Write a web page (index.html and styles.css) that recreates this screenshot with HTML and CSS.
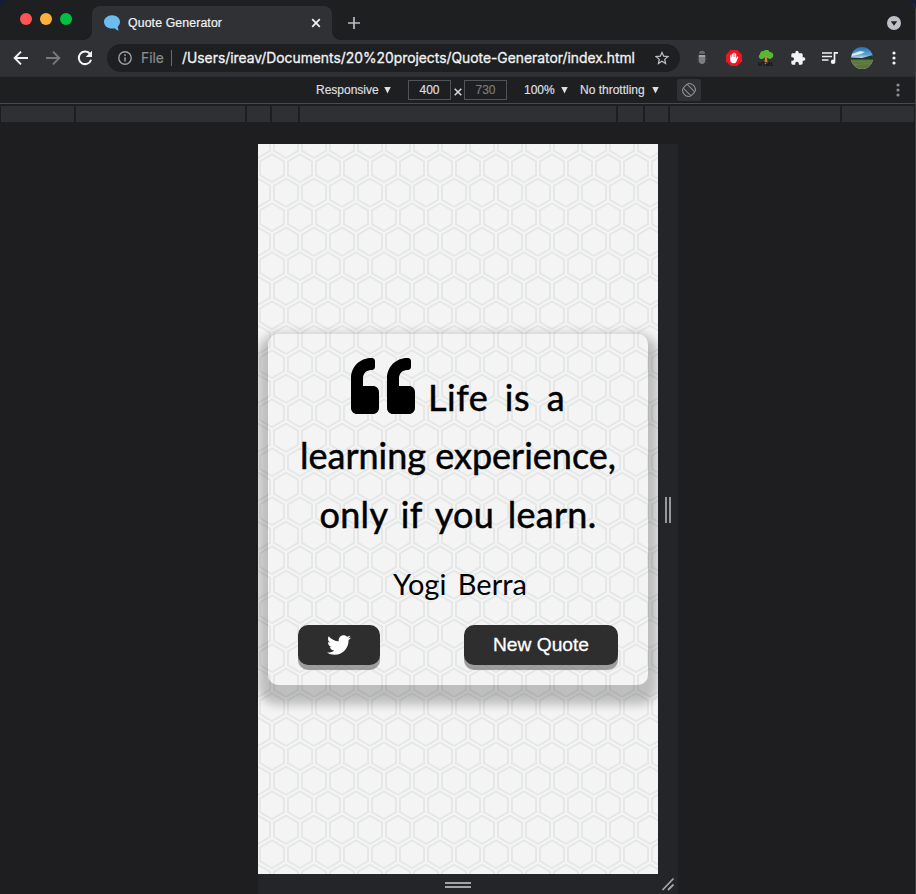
FILE: index.html
```html
<!DOCTYPE html>
<html lang="en">
<head>
<meta charset="utf-8">
<title>Quote Generator</title>
<link rel="stylesheet" href="styles.css">
</head>
<body>
<div class="window">
  <header class="tabstrip">
    <div class="lights"><i class="red"></i><i class="amber"></i><i class="green"></i></div>
    <div class="tab">
      <svg class="favicon" width="18" height="18" viewBox="0 0 18 18"><path fill="#6bbdf0" d="M9 1.200C13.500 1.200 17 4 17 7.800c0 2-.8 3.600-2.200 4.900.1 1.500.3 2.700 1 3.800-2-.3-3.100-1.200-4.200-2.300-.8.200-1.700.3-2.600.3C4.500 14.500 1 11.600 1 7.900S4.500 1.200 9 1.200z"/></svg>
      <span class="tab-title">Quote Generator</span>
      <svg width="10" height="10" viewBox="0 0 10 10"><path d="M1.200 1.200l7.600 7.600M8.800 1.200L1.200 8.800" stroke="#f1f3f4" stroke-width="1.700"/></svg>
    </div>
    <svg class="plus" width="14" height="14" viewBox="0 0 14 14"><path d="M7 1v12M1 7h12" stroke="#b9bcc1" stroke-width="1.700"/></svg>
    <svg class="search-tabs" width="14" height="14" viewBox="0 0 14 14"><circle cx="7" cy="7" r="7" fill="#bdc1c6"/><path d="M3.800 5.200h6.400L7 9.800z" fill="#202124"/></svg>
  </header>

  <div class="toolbar">
    <svg width="16" height="16" viewBox="0 0 16 16" fill="none" stroke="#f1f3f4" stroke-width="1.900"><path d="M15 8H2.500M8 1.700L1.700 8 8 14.300"/></svg>
    <svg width="16" height="16" viewBox="0 0 16 16" fill="none" stroke="#77797d" stroke-width="1.900"><path d="M1 8h12.500M8 1.700L14.300 8 8 14.300"/></svg>
    <svg width="16" height="16" viewBox="0 0 16 16"><path d="M13.200 4.100A6.300 6.300 0 1 0 14.100 9.700" fill="none" stroke="#f1f3f4" stroke-width="2"/><path d="M15 .8v6.300H8.700z" fill="#f1f3f4"/></svg>
    <div class="address">
      <svg width="14" height="14" viewBox="0 0 14 14"><circle cx="7" cy="7" r="6.200" fill="none" stroke="#9aa0a6" stroke-width="1.400"/><path d="M7 6.200v4.300M7 3.300v1.600" stroke="#9aa0a6" stroke-width="1.500"/></svg>
      <span class="scheme">File</span><span class="divider"></span><span class="url">/Users/ireav/Documents/20%20projects/Quote-Generator/index.html</span>
      <svg class="star" width="14" height="14" viewBox="0 0 14 14"><path d="M7 1.400l1.700 3.800 4.200.4-3.200 2.800.9 4.100L7 10.300l-3.600 2.200.9-4.100L1.100 5.600l4.200-.4z" fill="none" stroke="#bdc1c6" stroke-width="1.200"/></svg>
    </div>
    <div class="extensions">
      <svg width="16" height="16" viewBox="0 0 16 16"><path d="M2.500 5.500l3 1.500M2 9h3M3 13l2.500-2M13.500 5.500l-3 1.500M14 9h-3M13 13l-2.500-2" stroke="#3e4044"/><path d="M5 3.800a3 3 0 0 1 6 0z" fill="#6a6c6f"/><path d="M4.700 5h6.600v5.500c0 2-1.300 3.500-3.300 3.500s-3.300-1.500-3.300-3.500z" fill="#7d7d7f"/><path d="M5 5h6v2H5z" fill="#a4a4a4"/></svg>
      <svg width="16" height="16" viewBox="0 0 16 16"><path d="M4.700 0h6.600L16 4.700v6.600L11.300 16H4.700L0 11.300V4.700z" fill="#ed1522"/><path d="M4.200 8.500V5.400q.6-.9 1.100 0v2.200h.4V3.900q.6-.9 1.200 0v3.200h.4V3q.7-.8 1.300 0v4.100H9V3.700q.6-.8 1.200 0v4.900l1.100-2q.9-.4 1.100.3L10.200 12c-.5.900-1.200 1.300-2.400 1.300-2.400 0-3.600-1.500-3.600-3.600z" fill="#fff"/></svg>
      <svg width="16" height="16" viewBox="0 0 16 16"><path d="M7 6.500h2l.6 7.500H6.400z" fill="#c98635"/><path d="M4 9a2.600 2.600 0 0 1-2-4.700A3 3 0 0 1 5.700 1.200a3.200 3.200 0 0 1 5.800.8A3.300 3.300 0 0 1 13.800 8c-1.300 1.500-3.500.9-4.500-.4L8 8.500 6.500 7.300C6 8.500 5 9 4 9z" fill="#4fbd32"/><path d="M8 11V5.500M8 8l2.500-2.500M8 7L6 5" stroke="#c98635" stroke-width="1.100"/><text x="0" y="16" font-family="Liberation Sans" font-weight="700" font-size="5.500" textLength="16" fill="#130e0b">HTML</text></svg>
      <svg width="16" height="16" viewBox="0 0 24 24"><path fill="#f1f3f4" d="M20.500 11H19V7c0-1.100-.9-2-2-2h-4V3.500a2.500 2.500 0 0 0-5 0V5H4c-1.100 0-2 .9-2 2v3.800h1.500a2.700 2.700 0 0 1 0 5.400H2V20c0 1.100.9 2 2 2h3.800v-1.500a2.700 2.700 0 0 1 5.400 0V22H17c1.100 0 2-.9 2-2v-4h1.500a2.500 2.500 0 0 0 0-5z"/></svg>
      <svg width="16" height="16" viewBox="0 0 16 16"><path d="M0 3h10M0 6.500h10M0 10h6.500M12.500 11V2.900h3.500" stroke="#f1f3f4" stroke-width="1.700" fill="none"/><circle cx="11.100" cy="11.700" r="2.300" fill="#f1f3f4"/></svg>
      <svg class="avatar" width="22" height="22" viewBox="0 0 22 22"><defs><clipPath id="round"><circle cx="11" cy="11" r="11"/></clipPath><linearGradient id="sky" x2="0" y2="1"><stop stop-color="#2670b0"/><stop offset=".35" stop-color="#5fa3d2"/><stop offset=".5" stop-color="#c4dcea"/></linearGradient></defs><g clip-path="url(#round)"><path fill="url(#sky)" d="M0 0h22v22H0z"/><path fill="#dbe9f1" d="M1 7l8-3 5 1-4 2-9 2z"/><path fill="#1c3925" d="M0 10.500l11 .5 11-3v5H0z"/><path fill="#5b733d" d="M0 12.500h22V22H0z"/><path d="M0 15l22-1M0 18l22-2" stroke="#718349" stroke-width=".8"/></g></svg>
      <svg class="dots" width="4" height="14" viewBox="0 0 4 14" fill="#f1f3f4"><circle cx="2" cy="2" r="1.600"/><circle cx="2" cy="7" r="1.600"/><circle cx="2" cy="12" r="1.600"/></svg>
    </div>
  </div>

  <div class="devicebar">
    <span class="responsive">Responsive</span><i class="caret"></i>
    <span class="size size-w">400</span>
    <svg class="times" width="8" height="8" viewBox="0 0 8 8"><path d="M.7.7l6.600 6.600M7.300.7L.7 7.300" stroke="#dcdee0" stroke-width="1.500"/></svg>
    <span class="size size-h">730</span>
    <span class="zoom">100%</span><i class="caret"></i>
    <span class="throttle">No throttling</span><i class="caret"></i>
    <span class="rotate"><svg width="14" height="14" viewBox="0 0 14 14" fill="none" stroke="#8b8d91" stroke-width="1.100"><rect x="4.200" y="1.400" width="5.600" height="11.200" rx="1" transform="rotate(-45 7 7)"/><path d="M5.500.7a6.500 6.500 0 0 1 7.800 7.800M8.500 13.300A6.500 6.500 0 0 1 .7 5.500"/></svg></span>
    <svg class="bar-dots" width="4" height="14" viewBox="0 0 4 14" fill="#8b8d91"><circle cx="2" cy="2" r="1.600"/><circle cx="2" cy="7" r="1.600"/><circle cx="2" cy="12" r="1.600"/></svg>
  </div>

  <div class="rulers"><i></i><i></i><i></i><i></i><i></i><i></i><i></i><i></i><i></i></div>

  <div class="device">
    <main class="page">
      <section class="quote-container">
        <div class="quote-text">
          <div class="line first"><svg width="64" height="64" viewBox="0 0 512 512"><path d="M464 256h-80v-64c0-35.300 28.700-64 64-64h8c13.300 0 24-10.700 24-24V56c0-13.300-10.700-24-24-24h-8c-88.400 0-160 71.600-160 160v240c0 26.500 21.500 48 48 48h128c26.500 0 48-21.500 48-48V304c0-26.500-21.500-48-48-48zm-288 0H96v-64c0-35.300 28.700-64 64-64h8c13.300 0 24-10.700 24-24V56c0-13.300-10.700-24-24-24h-8C71.600 32 0 103.600 0 192v240c0 26.500 21.500 48 48 48h128c26.500 0 48-21.500 48-48V304c0-26.500-21.500-48-48-48z"/></svg><span>Life is a</span></div>
          <div class="line second">learning experience,</div>
          <div class="line third">only if you learn.</div>
        </div>
        <div class="quote-author">Yogi Berra</div>
        <div class="buttons">
          <button class="twitter" aria-label="Tweet"><svg width="24" height="24" viewBox="0 0 512 512"><path fill="#fff" d="M459.370 151.716c.325 4.548.325 9.097.325 13.645 0 138.720-105.583 298.558-298.558 298.558-59.452 0-114.680-17.219-161.137-47.106 8.447.974 16.568 1.299 25.340 1.299 49.055 0 94.213-16.568 130.274-44.832-46.132-.975-84.792-31.188-98.112-72.772 6.498.974 12.995 1.624 19.818 1.624 9.421 0 18.843-1.300 27.614-3.573-48.081-9.747-84.143-51.980-84.143-102.985v-1.299c13.969 7.797 30.214 12.670 47.431 13.319-28.264-18.843-46.781-51.005-46.781-87.391 0-19.492 5.197-37.360 14.294-52.954 51.655 63.675 129.300 105.258 216.365 109.807-1.624-7.797-2.599-15.918-2.599-24.040 0-57.828 46.782-104.934 104.934-104.934 30.213 0 57.502 12.670 76.670 33.137 23.715-4.548 46.456-13.320 66.599-25.340-7.798 24.366-24.366 44.833-46.132 57.827 21.117-2.273 41.584-8.122 60.426-16.243-14.292 20.791-32.161 39.308-52.628 54.253z"/></svg></button>
          <button class="new-quote">New Quote</button>
        </div>
      </section>
    </main>
    <div class="handle-right"><i></i><i></i></div>
    <div class="handle-bottom"><i></i><i></i></div>
    <svg class="handle-corner" width="20" height="20" viewBox="0 0 20 20" stroke="#a3a4a6" stroke-width="1.800"><path d="M4.500 16L15.500 4.500M10 16l5.500-5.500"/></svg>
  </div>
</div>
</body>
</html>
```
FILE: styles.css
```css
* { box-sizing: border-box; }
body { margin: 0; background: #171b3b; font-family: Inter, "Liberation Sans", sans-serif; }
svg { display: block; flex: none; }
i { display: block; }

.window { width: 916px; height: 894px; overflow: hidden; background: #1e1e20; border-radius: 10px 10px 0 0; border-right: 1px solid #3d3e40; }

.tabstrip { height: 40px; display: flex; align-items: center; padding-right: 14px; background: #1e1f21; }
.lights { display: flex; gap: 8px; width: 92px; padding-left: 20px; margin-top: -2px; }
.lights i { width: 12px; height: 12px; border-radius: 50%; }
.red { background: #ff5550; }
.amber { background: #ffb03c; }
.green { background: #00c141; }
.tab { position: relative; align-self: flex-end; width: 240px; height: 34px; display: flex; align-items: center; padding: 0 11px; border-radius: 8px 8px 0 0; background: #303135; }
.tab::before, .tab::after { content: ""; position: absolute; bottom: 0; width: 8px; height: 8px; }
.tab::before { left: -8px; background: radial-gradient(circle at 0 0, transparent 7.500px, #303135 8px); }
.tab::after { right: -8px; background: radial-gradient(circle at 100% 0, transparent 7.500px, #303135 8px); }
.tab-title { flex: 1; margin-left: 7px; font: 12.300px/16px "Liberation Sans", sans-serif; letter-spacing: .12px; color: #f1f3f4; -webkit-text-stroke: .2px; }
.plus { margin-left: 15px; margin-top: 6px; }
.search-tabs { margin-left: auto; margin-top: 6px; }

.toolbar { height: 36px; display: flex; align-items: center; padding-left: 13px; gap: 16px; background: #303135; }
.address { width: 573px; height: 28px; margin-left: -2px; display: flex; align-items: center; padding: 0 11px; border-radius: 14px; background: #1e1f21; font-size: 14px; white-space: nowrap; }
.scheme { width: 30px; margin-left: 9px; font-size: 13.800px; color: #888c91; -webkit-text-stroke: .2px; }
.divider { width: 1px; height: 16px; background: #696c70; }
.url { margin-left: 10px; font-size: 13.850px; color: #f1f3f4; -webkit-text-stroke: .3px; }
.star { margin-left: auto; }
.extensions { display: flex; align-items: center; gap: 16px; margin-left: -2px; }
.avatar { margin-left: -3px; }
.dots { margin-left: 3px; }

.devicebar { height: 28px; display: flex; align-items: center; padding-left: 316px; background: #1e1f21; border-top: 1px solid #292a2d; border-bottom: 1px solid #47494c; font: 12px/14px "Liberation Sans", sans-serif; color: #dcdee0; white-space: nowrap; -webkit-text-stroke: .2px; }
.responsive { width: 68px; }
.caret { width: 7px; height: 7px; background: #dcdee0; clip-path: polygon(0 0, 100% 0, 50% 100%); }
.size { width: 43px; height: 20px; line-height: 19px; border: 1px solid #515356; text-align: center; }
.size-w { margin-left: 17px; }
.size-h { color: #777a7e; }
.times { margin: 3px 2px 0 3px; }
.zoom { width: 37px; margin-left: 17px; }
.throttle { width: 72px; margin-left: 12px; }
.rotate { width: 24px; height: 22px; margin-left: 18px; display: grid; place-items: center; border-radius: 2px; background: #303135; }
.bar-dots { margin-left: auto; margin-right: 15px; }

.rulers { height: 18px; padding: 2px 0 0 1px; display: grid; grid-template-columns: 73px 169px 23px 26px 316px 25px 23px 170px 72px; gap: 2px; }
.rulers i { background: #2e3034; }

.device { width: 420px; height: 750px; margin: 22px 0 0 258px; display: grid; grid-template: 730px 20px / 400px 20px; background: #242529; }
.page {
  display: flex; align-items: center; justify-content: center; overflow: hidden; background-color: #f4f4f4;
  background-image: url("data:image/svg+xml,%3Csvg xmlns='http://www.w3.org/2000/svg' width='28' height='49' viewBox='0 0 28 49'%3E%3Cpath fill='%23e6e8e8' fill-rule='evenodd' d='M13.99 9.25l13 7.5v15l-13 7.5L1 31.75v-15l12.99-7.5zM3 17.9v12.7l10.99 6.34 11-6.35V17.9l-11-6.34L3 17.9zM0 15l12.98-7.5V0h-2v6.35L0 12.69v2.3zm0 18.5L12.98 41v8h-2v-6.85L0 35.81v-2.3zM15 0v7.5L27.99 15H28v-2.31h-.01L17 6.35V0h-2zm0 49v-8l12.99-7.5H28v2.31h-.01L17 42.15V49h-2z'/%3E%3C/svg%3E");
}
.quote-container { width: 380px; height: 351px; padding: 20px 30px; border-radius: 10px; box-shadow: 0 10px 10px 10px rgba(0, 0, 0, .22); }
.quote-text { height: 196px; font: 36px/59px Lato, "Liberation Sans", sans-serif; color: #000; -webkit-text-stroke: .5px; }
.line { height: 59px; white-space: nowrap; }
.first { display: flex; height: 64px; padding-left: 53px; }
.first span { margin-left: 13px; padding-top: 14px; letter-spacing: .5px; word-spacing: 7px; }
.second { margin-top: 8px; text-align: center; }
.third { text-align: center; letter-spacing: .3px; word-spacing: 4px; }
.quote-author { height: 75px; padding: 14px 0 0 4px; font: 29px/40px Lato, "Liberation Sans", sans-serif; word-spacing: 4px; text-align: center; color: #000; }
.buttons { display: flex; justify-content: space-between; }
button { height: 40px; padding: 0; border: 0; border-radius: 10px; background: #2e2e2e; color: #fff; font: 19.200px/38px "Liberation Sans", sans-serif; box-shadow: 0 5px rgba(121, 121, 121, .7); }
.twitter { width: 82px; display: grid; place-items: center; }
.new-quote { width: 154px; -webkit-text-stroke: .3px; }

.handle-right { display: flex; justify-content: center; align-items: center; gap: 2px; }
.handle-right i { width: 2px; height: 26px; margin-top: 2px; background: #97989a; }
.handle-bottom { display: flex; flex-direction: column; justify-content: center; align-items: center; gap: 2px; padding-top: 2px; }
.handle-bottom i { width: 26px; height: 2px; background: #a3a4a6; }
```
